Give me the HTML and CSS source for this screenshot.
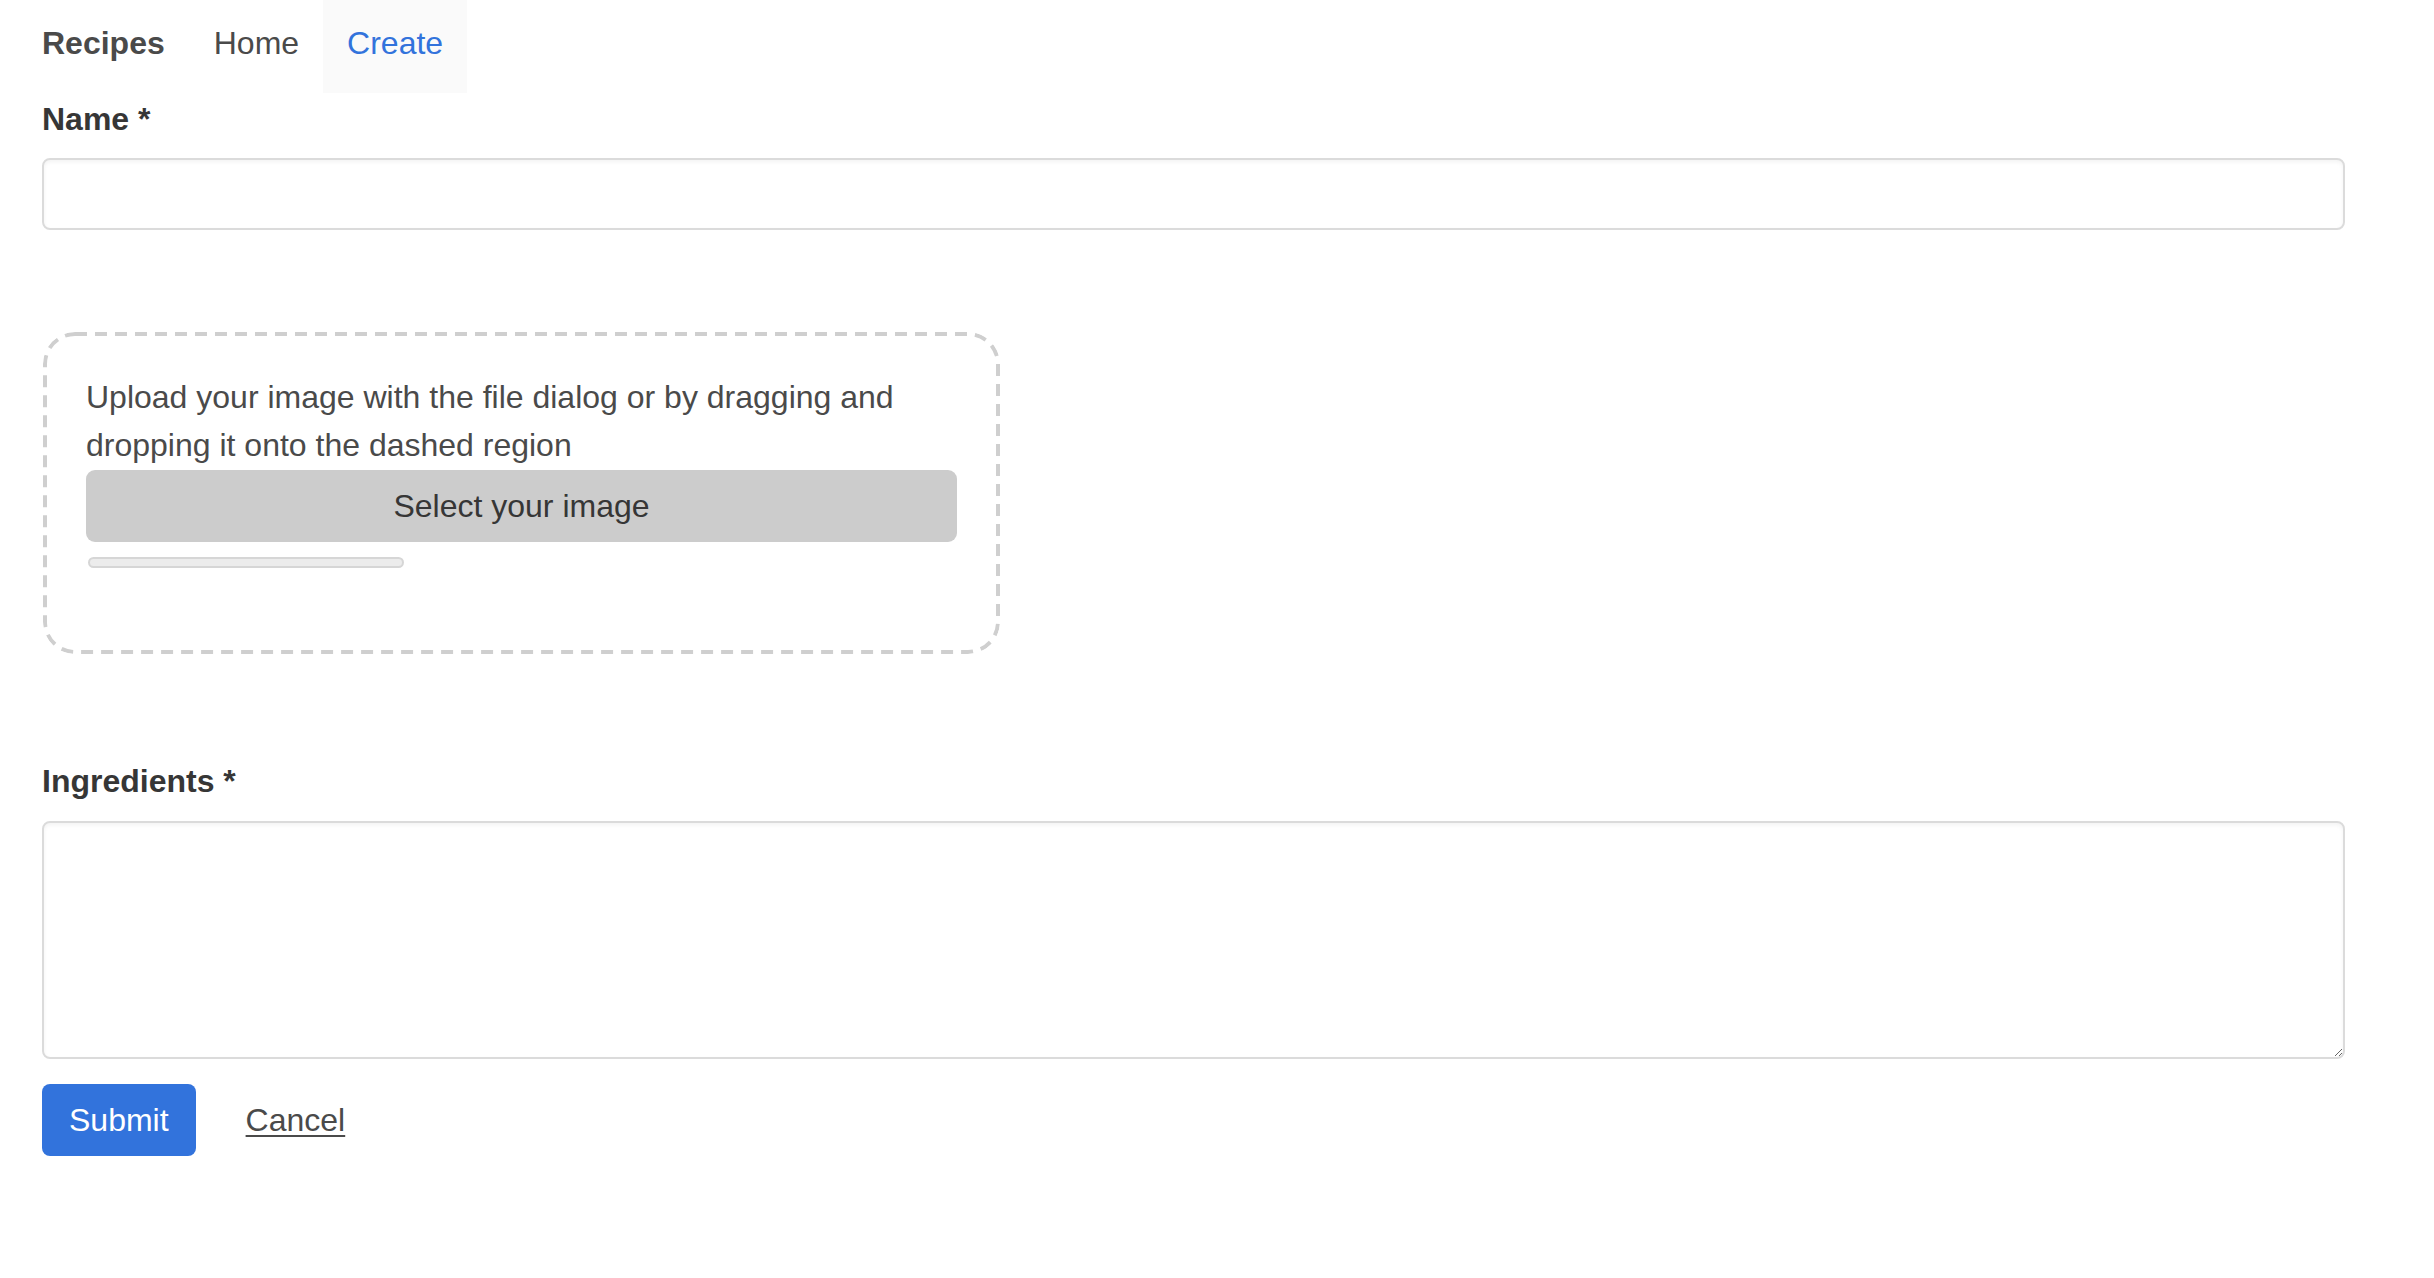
FILE: index.html
```html
<!DOCTYPE html>
<html lang="en">
<head>
<meta charset="utf-8">
<title>Recipes – Create</title>
<link rel="stylesheet" href="styles.css">
</head>
<body>
<div class="page">
  <nav class="navbar">
    <a class="nav-brand" href="#">Recipes</a>
    <a class="nav-item" href="#">Home</a>
    <a class="nav-item is-active" href="#">Create</a>
  </nav>

  <form class="form">
    <div class="field">
      <label class="label" for="name">Name *</label>
      <input class="input" id="name" type="text">
    </div>

    <div class="dropzone">
      <p class="dropzone-text">Upload your image with the file dialog or by dragging and dropping it onto the dashed region</p>
      <button type="button" class="select-btn">Select your image</button>
      <div class="progress"></div>
    </div>

    <div class="field field-ingredients">
      <label class="label" for="ingredients">Ingredients *</label>
      <textarea class="textarea" id="ingredients"></textarea>
    </div>

    <div class="actions">
      <button type="submit" class="submit-btn">Submit</button>
      <a class="cancel" href="#">Cancel</a>
    </div>
  </form>
</div>
</body>
</html>
```

FILE: styles.css
```css
* {
  box-sizing: border-box;
}

html, body {
  margin: 0;
  padding: 0;
  background: #ffffff;
}

body {
  font-family: "Liberation Sans", Arial, sans-serif;
  font-size: 32px;
  line-height: 48px;
  color: #4a4a4a;
}

.page {
  padding: 0 89px 0 42px;
}

/* Navbar */
.navbar {
  display: flex;
  align-items: stretch;
  height: 93px;
}

.nav-brand,
.nav-item {
  display: block;
  text-decoration: none;
  color: #4a4a4a;
  padding: 19px 24px 26px 24px;
  line-height: 48px;
}

.nav-brand {
  font-weight: 700;
  padding-left: 0;
  padding-right: 25px;
}

.nav-item.is-active {
  background: #fafafa;
  color: #3273dc;
}

/* Form */
.form {
  width: 2303px;
}

.field {
  padding-top: 2px;
}

.label {
  display: block;
  font-weight: 700;
  color: #363636;
  line-height: 48px;
  margin-bottom: 15px;
}

.input,
.textarea {
  display: block;
  width: 100%;
  margin: 0;
  font-family: inherit;
  font-size: 32px;
  color: #363636;
  background: #ffffff;
  border: 2px solid #dbdbdb;
  border-radius: 8px;
  box-shadow: inset 0 2px 4px rgba(10, 10, 10, 0.05);
  outline: none;
}

.input {
  height: 72px;
  padding: 0 22px;
}

.textarea {
  height: 238px;
  padding: 20px 22px;
  resize: both;
}

/* Dropzone: dashed outline drawn as a vector background so the dash rhythm matches */
.dropzone {
  width: 957px;
  height: 322px;
  margin-top: 102px;
  margin-left: 1px;
  border-radius: 32px;
  padding: 41px 43px 0 43px;
  background-image: url("data:image/svg+xml,%3Csvg xmlns='http://www.w3.org/2000/svg' width='957' height='322'%3E%3Crect x='2' y='2' width='953' height='318' rx='30' ry='30' fill='none' stroke='%23cfcfcf' stroke-width='4' stroke-dasharray='12 8'/%3E%3C/svg%3E");
  background-repeat: no-repeat;
  background-size: 957px 322px;
}

.dropzone-text {
  margin: 0;
  line-height: 48px;
  color: #4a4a4a;
}

.select-btn {
  display: block;
  width: 100%;
  height: 72px;
  margin: 1px 0 0 0;
  border: none;
  border-radius: 9px;
  background: #cccccc;
  color: #363636;
  font-family: inherit;
  font-size: 32px;
  line-height: 48px;
  padding: 0;
  text-align: center;
}

.progress {
  width: 316px;
  height: 11px;
  margin: 15px 0 0 2px;
  background: #ececec;
  border: 2px solid #d6d6d6;
  border-radius: 6px;
}

.field-ingredients {
  margin-top: 101px;
}

.field-ingredients .label {
  margin-bottom: 16px;
}

/* Actions */
.actions {
  display: flex;
  align-items: center;
  margin-top: 25px;
}

.submit-btn {
  height: 72px;
  padding: 0 27px;
  border: none;
  border-radius: 8px;
  background: #3273dc;
  color: #ffffff;
  font-family: inherit;
  font-size: 32px;
  line-height: 48px;
}

.cancel {
  margin-left: 50px;
  color: #4a4a4a;
  text-decoration: underline;
  text-underline-offset: 4px;
  text-decoration-thickness: 2px;
}
```
